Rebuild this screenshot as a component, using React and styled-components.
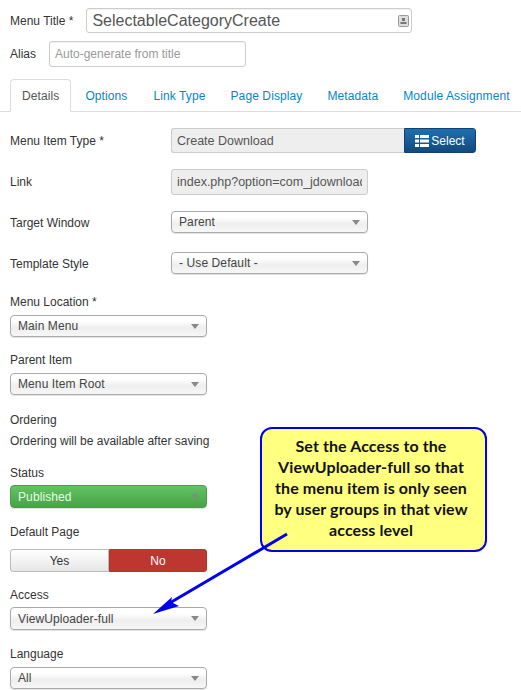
import React from "react";
import styled, { createGlobalStyle } from "styled-components";

const Global = createGlobalStyle`
  html, body {
    margin: 0;
    padding: 0;
    background: #fff;
  }
  body {
    font-family: "Liberation Sans", Arial, sans-serif;
    font-size: 12px;
    color: #333;
  }
`;

const Page = styled.div`
  position: relative;
  width: 521px;
  height: 690px;
  overflow: hidden;
  padding: 8px 0 0 10px;
  box-sizing: border-box;
`;

const TitleRow = styled.div`
  display: flex;
  align-items: center;
  gap: ${(p) => p.$gap}px;
  margin-bottom: ${(p) => p.$mb}px;
`;

const Label = styled.label`
  display: block;
  font-size: 12px;
  line-height: 16px;
  color: #333;
  padding-top: ${(p) => p.$pt || 0}px;
`;

const TextBox = styled.div`
  box-sizing: border-box;
  position: relative;
  width: ${(p) => p.$w}px;
  height: ${(p) => p.$h}px;
  padding: 0 5px;
  display: flex;
  align-items: center;
  white-space: nowrap;
  overflow: hidden;
  font-size: ${(p) => p.$size}px;
  color: ${(p) => p.$color};
  background: #fff;
  border: 1px solid #ccc;
  border-radius: 3px;
  box-shadow: inset 0 1px 1px rgba(0, 0, 0, 0.06);
`;

const KeyIcon = styled.svg`
  position: absolute;
  right: 2px;
  top: 6px;
`;

const Tabs = styled.div`
  display: flex;
  height: 32px;
  margin: 12px 0 16px -10px;
  padding-left: 10px;
  border-bottom: 1px solid #ddd;
`;

const Tab = styled.div`
  box-sizing: border-box;
  height: 33px;
  padding: 0 ${(p) => p.$pad}px;
  display: flex;
  align-items: center;
  font-size: 12px;
  letter-spacing: 0.1px;
  white-space: nowrap;
  color: ${(p) => (p.$active ? "#555" : "#0088cc")};
  background: ${(p) => (p.$active ? "#fff" : "transparent")};
  border: 1px solid ${(p) => (p.$active ? "#ddd" : "transparent")};
  border-bottom-color: ${(p) => (p.$active ? "#fff" : "transparent")};
  border-radius: 4px 4px 0 0;
`;

const Row = styled.div`
  display: grid;
  grid-template-columns: 161px auto;
  justify-content: start;
  align-items: center;
  margin-bottom: ${(p) => p.$mb}px;
`;

const ReadOnlyBox = styled(TextBox)`
  background: #eee;
  color: #555;
  box-shadow: none;
  font-size: 12.5px;
`;

const Clipped = styled.span`
  display: block;
  width: 185px;
  overflow: hidden;
`;

const Group = styled.div`
  display: flex;
`;

const TypeBox = styled(ReadOnlyBox)`
  border-radius: 3px 0 0 3px;
  border-right: 0;
`;

const SelectButton = styled.div`
  box-sizing: border-box;
  width: 72px;
  height: 25px;
  display: flex;
  align-items: center;
  justify-content: center;
  gap: 2px;
  color: #fff;
  font-size: 12px;
  background: linear-gradient(#1f6fb0, #124a7e);
  border: 1px solid #0f4271;
  border-radius: 0 3px 3px 0;
`;

const Dropdown = styled.div`
  box-sizing: border-box;
  width: 197px;
  height: ${(p) => p.$h || 22}px;
  padding: 0 7px;
  display: flex;
  align-items: center;
  justify-content: space-between;
  font-size: 12px;
  letter-spacing: 0.1px;
  color: ${(p) => (p.$green ? "#eafbe6" : "#444")};
  background: ${(p) =>
    p.$green
      ? "linear-gradient(#62c462, #47a247)"
      : "linear-gradient(#fff 0%, #fff 25%, #eee 60%, #f7f7f7 100%)"};
  border: 1px solid ${(p) => (p.$green ? "#4d9a4d" : "#aaa")};
  border-radius: 4px;
  box-shadow: 0 1px 1px rgba(0, 0, 0, 0.12);
`;

const Caret = styled.span`
  width: 0;
  height: 0;
  border-left: 4px solid transparent;
  border-right: 4px solid transparent;
  border-top: 5px solid #888;
`;

const Stack = styled.div`
  margin-bottom: ${(p) => p.$mb}px;
  & > label {
    margin-bottom: ${(p) => p.$gap}px;
  }
`;

const Toggle = styled.div`
  display: flex;
  width: 197px;
  height: 23px;
`;

const ToggleSide = styled.div`
  box-sizing: border-box;
  width: ${(p) => p.$w}px;
  display: flex;
  align-items: center;
  justify-content: center;
  font-size: 12px;
  color: ${(p) => (p.$on ? "#fff" : "#333")};
  background: ${(p) => (p.$on ? "#bd362f" : "linear-gradient(#fff, #e6e6e6)")};
  border: 1px solid ${(p) => (p.$on ? "#b5342d" : "#bbb")};
  border-radius: ${(p) => (p.$on ? "0 3px 3px 0" : "3px 0 0 3px")};
`;

const Callout = styled.div`
  position: absolute;
  left: 260px;
  top: 427px;
  width: 227px;
  height: 125px;
  box-sizing: border-box;
  padding: 6px 7px 0 2px;
  background: #ffff80;
  border: 2px solid #0000e6;
  border-radius: 12px;
  text-align: center;
  font-family: Lato, "Open Sans", sans-serif;
  font-weight: 700;
  font-size: 16px;
  line-height: 21px;
  letter-spacing: 0.1px;
  white-space: nowrap;
  color: #111;
`;

const Arrow = styled.svg`
  position: absolute;
  left: 0;
  top: 0;
  pointer-events: none;
`;

function Select({ children, ...rest }) {
  return (
    <Dropdown {...rest}>
      <span>{children}</span>
      <Caret />
    </Dropdown>
  );
}

export default function App() {
  return (
    <>
      <Global />
      <Page>
        <TitleRow $gap={13} $mb={8}>
          <Label>Menu Title *</Label>
          <TextBox $w={326} $h={25} $size={16} $color="#555">
            SelectableCategoryCreate
            <KeyIcon width="11" height="12" viewBox="0 0 11 12">
              <rect x="0.5" y="0.5" width="10" height="11" rx="1" fill="#ddd" stroke="#999" />
              <rect x="4" y="3" width="3" height="3" fill="#777" />
              <rect x="2.5" y="7" width="6" height="2" fill="#777" />
            </KeyIcon>
          </TextBox>
        </TitleRow>
        <TitleRow $gap={13} $mb={0}>
          <Label>Alias</Label>
          <TextBox $w={197} $h={26} $size={12} $color="#999">
            Auto-generate from title
          </TextBox>
        </TitleRow>

        <Tabs>
          <Tab $active $pad={11}>Details</Tab>
          <Tab $pad={13}>Options</Tab>
          <Tab $pad={11}>Link Type</Tab>
          <Tab $pad={12}>Page Display</Tab>
          <Tab $pad={11}>Metadata</Tab>
          <Tab $pad={12}>Module Assignment</Tab>
        </Tabs>

        <Row $mb={16}>
          <Label>Menu Item Type *</Label>
          <Group>
            <TypeBox $w={233} $h={25} $size={12} $color="#555">Create Download</TypeBox>
            <SelectButton>
              <svg width="14" height="12" viewBox="0 0 14 12">
                <rect x="0" y="0" width="14" height="3" fill="#fff" />
                <rect x="0" y="4.5" width="14" height="3" fill="#fff" />
                <rect x="0" y="9" width="14" height="3" fill="#fff" />
                <rect x="4" y="0" width="1" height="12" fill="#1a5f98" />
              </svg>
              Select
            </SelectButton>
          </Group>
        </Row>
        <Row $mb={16}>
          <Label>Link</Label>
          <ReadOnlyBox $w={197} $h={26} $size={12} $color="#555">
            <Clipped>index.php?option=com_jdownloads</Clipped>
          </ReadOnlyBox>
        </Row>
        <Row $mb={19}>
          <Label $pt={1}>Target Window</Label>
          <Select>Parent</Select>
        </Row>
        <Row $mb={20}>
          <Label $pt={1}>Template Style</Label>
          <Select>- Use Default -</Select>
        </Row>

        <Stack $mb={15} $gap={5}>
          <Label>Menu Location *</Label>
          <Select>Main Menu</Select>
        </Stack>
        <Stack $mb={17} $gap={5}>
          <Label>Parent Item</Label>
          <Select>Menu Item Root</Select>
        </Stack>
        <Stack $mb={16} $gap={5}>
          <Label>Ordering</Label>
          <Label>Ordering will be available after saving</Label>
        </Stack>
        <Stack $mb={16} $gap={4}>
          <Label>Status</Label>
          <Select $green $h={23}>Published</Select>
        </Stack>
        <Stack $mb={15} $gap={9}>
          <Label>Default Page</Label>
          <Toggle>
            <ToggleSide $w={99}>Yes</ToggleSide>
            <ToggleSide $w={98} $on>No</ToggleSide>
          </Toggle>
        </Stack>
        <Stack $mb={16} $gap={4}>
          <Label>Access</Label>
          <Select $h={23}>ViewUploader-full</Select>
        </Stack>
        <Stack $mb={0} $gap={5}>
          <Label>Language</Label>
          <Select>All</Select>
        </Stack>

        <Callout>
          Set the Access to the
          <br />
          ViewUploader-full so that
          <br />
          the menu item is only seen
          <br />
          by user groups in that view
          <br />
          access level
        </Callout>
        <Arrow width="521" height="690" viewBox="0 0 521 690">
          <line x1="287" y1="534" x2="168" y2="604" stroke="#0000f0" strokeWidth="3" />
          <polygon points="153,614 172,597 171,602 179,606" fill="#0000f0" />
        </Arrow>
      </Page>
    </>
  );
}
